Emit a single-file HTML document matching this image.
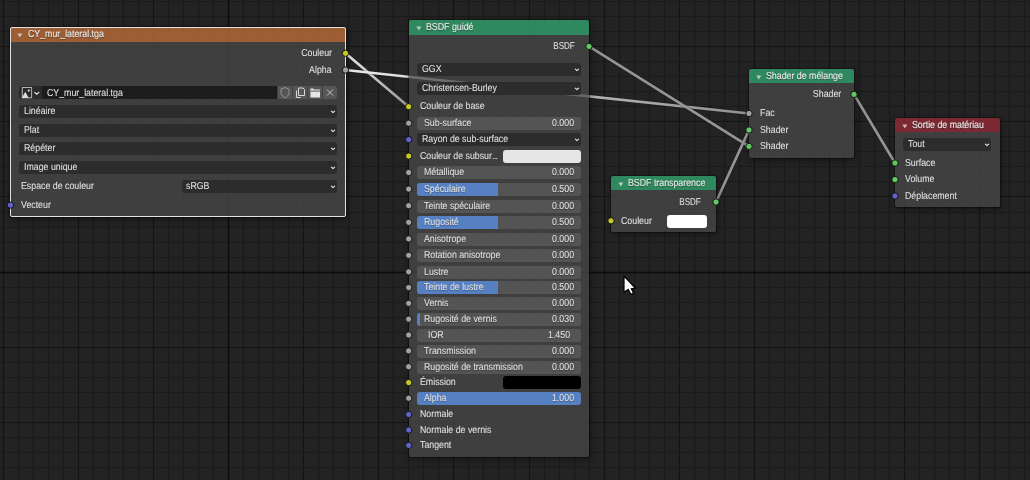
<!DOCTYPE html><html><head><meta charset="utf-8"><style>
html,body{margin:0;padding:0;}
body{width:1030px;height:480px;overflow:hidden;background:#232323;position:relative;font-family:"Liberation Sans", sans-serif;}
#wrap{position:absolute;left:0;top:0;width:1030px;height:480px;will-change:transform;text-rendering:geometricPrecision;}
.abs{position:absolute;}
.node{position:absolute;border-radius:2px;box-shadow:0 0 0 1px rgba(0,0,0,0.3),1px 2px 7px rgba(0,0,0,0.45);}
.hdr{position:absolute;left:0;top:0;right:0;border-radius:2px 2px 0 0;}
.body{position:absolute;left:0;right:0;bottom:0;border-radius:0 0 2px 2px;}
.t{position:absolute;font-size:10px;line-height:10px;height:10px;white-space:nowrap;color:#e2e2e2;transform:scaleX(0.88);transform-origin:0 0;-webkit-text-stroke:0.06px #e2e2e2;}
.t.r{transform-origin:100% 0;}
.ht{position:absolute;font-size:10px;line-height:10px;height:10px;white-space:nowrap;color:#e8e8e8;transform:scaleX(0.88);transform-origin:0 0;-webkit-text-stroke:0.15px #e8e8e8;text-shadow:0 1px 1px rgba(0,0,0,0.5);}
.sh{text-shadow:0 1px 1px rgba(0,0,0,0.35);}
.dd{position:absolute;background:#2c2c2c;border-radius:3px;}
.sl{position:absolute;background:#545454;border-radius:3px;overflow:hidden;}
.fill{position:absolute;left:0;top:0;bottom:0;background:#5680c2;}
.sock{position:absolute;width:6px;height:6px;border-radius:50%;border:1px solid #111;}

</style></head><body><div id="wrap">
<svg class="abs" style="left:0;top:0" width="1030" height="480" viewBox="0 0 1030 480"><g stroke="#1b1b1b" stroke-width="1.2"><line x1="18.50" y1="0" x2="18.50" y2="480"/><line x1="33.50" y1="0" x2="33.50" y2="480"/><line x1="48.50" y1="0" x2="48.50" y2="480"/><line x1="63.50" y1="0" x2="63.50" y2="480"/><line x1="93.50" y1="0" x2="93.50" y2="480"/><line x1="108.50" y1="0" x2="108.50" y2="480"/><line x1="123.50" y1="0" x2="123.50" y2="480"/><line x1="138.50" y1="0" x2="138.50" y2="480"/><line x1="168.50" y1="0" x2="168.50" y2="480"/><line x1="183.50" y1="0" x2="183.50" y2="480"/><line x1="198.50" y1="0" x2="198.50" y2="480"/><line x1="213.50" y1="0" x2="213.50" y2="480"/><line x1="243.50" y1="0" x2="243.50" y2="480"/><line x1="258.50" y1="0" x2="258.50" y2="480"/><line x1="273.50" y1="0" x2="273.50" y2="480"/><line x1="288.50" y1="0" x2="288.50" y2="480"/><line x1="318.50" y1="0" x2="318.50" y2="480"/><line x1="333.50" y1="0" x2="333.50" y2="480"/><line x1="348.50" y1="0" x2="348.50" y2="480"/><line x1="363.50" y1="0" x2="363.50" y2="480"/><line x1="393.50" y1="0" x2="393.50" y2="480"/><line x1="408.50" y1="0" x2="408.50" y2="480"/><line x1="423.50" y1="0" x2="423.50" y2="480"/><line x1="438.50" y1="0" x2="438.50" y2="480"/><line x1="468.50" y1="0" x2="468.50" y2="480"/><line x1="483.50" y1="0" x2="483.50" y2="480"/><line x1="498.50" y1="0" x2="498.50" y2="480"/><line x1="514.50" y1="0" x2="514.50" y2="480"/><line x1="544.50" y1="0" x2="544.50" y2="480"/><line x1="559.50" y1="0" x2="559.50" y2="480"/><line x1="574.50" y1="0" x2="574.50" y2="480"/><line x1="589.50" y1="0" x2="589.50" y2="480"/><line x1="619.50" y1="0" x2="619.50" y2="480"/><line x1="634.50" y1="0" x2="634.50" y2="480"/><line x1="649.50" y1="0" x2="649.50" y2="480"/><line x1="664.50" y1="0" x2="664.50" y2="480"/><line x1="694.50" y1="0" x2="694.50" y2="480"/><line x1="709.50" y1="0" x2="709.50" y2="480"/><line x1="724.50" y1="0" x2="724.50" y2="480"/><line x1="739.50" y1="0" x2="739.50" y2="480"/><line x1="769.50" y1="0" x2="769.50" y2="480"/><line x1="784.50" y1="0" x2="784.50" y2="480"/><line x1="799.50" y1="0" x2="799.50" y2="480"/><line x1="814.50" y1="0" x2="814.50" y2="480"/><line x1="844.50" y1="0" x2="844.50" y2="480"/><line x1="859.50" y1="0" x2="859.50" y2="480"/><line x1="874.50" y1="0" x2="874.50" y2="480"/><line x1="889.50" y1="0" x2="889.50" y2="480"/><line x1="919.50" y1="0" x2="919.50" y2="480"/><line x1="934.50" y1="0" x2="934.50" y2="480"/><line x1="949.50" y1="0" x2="949.50" y2="480"/><line x1="964.50" y1="0" x2="964.50" y2="480"/><line x1="994.50" y1="0" x2="994.50" y2="480"/><line x1="1009.50" y1="0" x2="1009.50" y2="480"/><line x1="1024.50" y1="0" x2="1024.50" y2="480"/><line x1="0" y1="1.50" x2="1030" y2="1.50"/><line x1="0" y1="16.50" x2="1030" y2="16.50"/><line x1="0" y1="31.50" x2="1030" y2="31.50"/><line x1="0" y1="61.50" x2="1030" y2="61.50"/><line x1="0" y1="76.50" x2="1030" y2="76.50"/><line x1="0" y1="91.50" x2="1030" y2="91.50"/><line x1="0" y1="106.50" x2="1030" y2="106.50"/><line x1="0" y1="136.50" x2="1030" y2="136.50"/><line x1="0" y1="151.50" x2="1030" y2="151.50"/><line x1="0" y1="166.50" x2="1030" y2="166.50"/><line x1="0" y1="181.50" x2="1030" y2="181.50"/><line x1="0" y1="212.50" x2="1030" y2="212.50"/><line x1="0" y1="227.50" x2="1030" y2="227.50"/><line x1="0" y1="242.50" x2="1030" y2="242.50"/><line x1="0" y1="257.50" x2="1030" y2="257.50"/><line x1="0" y1="287.50" x2="1030" y2="287.50"/><line x1="0" y1="302.50" x2="1030" y2="302.50"/><line x1="0" y1="317.50" x2="1030" y2="317.50"/><line x1="0" y1="332.50" x2="1030" y2="332.50"/><line x1="0" y1="362.50" x2="1030" y2="362.50"/><line x1="0" y1="377.50" x2="1030" y2="377.50"/><line x1="0" y1="392.50" x2="1030" y2="392.50"/><line x1="0" y1="407.50" x2="1030" y2="407.50"/><line x1="0" y1="437.50" x2="1030" y2="437.50"/><line x1="0" y1="452.50" x2="1030" y2="452.50"/><line x1="0" y1="467.50" x2="1030" y2="467.50"/></g><g stroke="#141414" stroke-width="1.2"><line x1="3.50" y1="0" x2="3.50" y2="480"/><line x1="78.50" y1="0" x2="78.50" y2="480"/><line x1="153.50" y1="0" x2="153.50" y2="480"/><line x1="303.50" y1="0" x2="303.50" y2="480"/><line x1="378.50" y1="0" x2="378.50" y2="480"/><line x1="453.50" y1="0" x2="453.50" y2="480"/><line x1="529.50" y1="0" x2="529.50" y2="480"/><line x1="604.50" y1="0" x2="604.50" y2="480"/><line x1="679.50" y1="0" x2="679.50" y2="480"/><line x1="754.50" y1="0" x2="754.50" y2="480"/><line x1="829.50" y1="0" x2="829.50" y2="480"/><line x1="904.50" y1="0" x2="904.50" y2="480"/><line x1="979.50" y1="0" x2="979.50" y2="480"/><line x1="0" y1="46.50" x2="1030" y2="46.50"/><line x1="0" y1="121.50" x2="1030" y2="121.50"/><line x1="0" y1="196.50" x2="1030" y2="196.50"/><line x1="0" y1="347.50" x2="1030" y2="347.50"/><line x1="0" y1="422.50" x2="1030" y2="422.50"/></g><g stroke="#0b0b0b" stroke-width="1.3"><line x1="228.50" y1="0" x2="228.50" y2="480"/><line x1="0" y1="272.50" x2="1030" y2="272.50"/></g></svg>
<svg class="abs" style="left:0;top:0" width="1030" height="480"><linearGradient id="l1" gradientUnits="userSpaceOnUse" x1="345.5" y1="53.3" x2="408.7" y2="106.7"><stop offset="0" stop-color="#e8e8e8"/><stop offset="1" stop-color="#969696"/></linearGradient><line x1="345.5" y1="53.3" x2="408.7" y2="106.7" stroke="#111" stroke-opacity="0.2" stroke-width="4.2"/><line x1="345.5" y1="53.3" x2="408.7" y2="106.7" stroke="url(#l1)" stroke-width="2.7"/><linearGradient id="l2" gradientUnits="userSpaceOnUse" x1="345.5" y1="70" x2="749" y2="113.5"><stop offset="0" stop-color="#ececec"/><stop offset="1" stop-color="#909090"/></linearGradient><line x1="345.5" y1="70" x2="749" y2="113.5" stroke="#111" stroke-opacity="0.2" stroke-width="4.2"/><line x1="345.5" y1="70" x2="749" y2="113.5" stroke="url(#l2)" stroke-width="2.7"/><linearGradient id="l3" gradientUnits="userSpaceOnUse" x1="589" y1="46.4" x2="749" y2="146.4"><stop offset="0" stop-color="#959595"/><stop offset="1" stop-color="#959595"/></linearGradient><line x1="589" y1="46.4" x2="749" y2="146.4" stroke="#111" stroke-opacity="0.2" stroke-width="4.2"/><line x1="589" y1="46.4" x2="749" y2="146.4" stroke="url(#l3)" stroke-width="2.7"/><linearGradient id="l4" gradientUnits="userSpaceOnUse" x1="716" y1="202" x2="749" y2="130"><stop offset="0" stop-color="#959595"/><stop offset="1" stop-color="#959595"/></linearGradient><line x1="716" y1="202" x2="749" y2="130" stroke="#111" stroke-opacity="0.2" stroke-width="4.2"/><line x1="716" y1="202" x2="749" y2="130" stroke="url(#l4)" stroke-width="2.7"/><linearGradient id="l5" gradientUnits="userSpaceOnUse" x1="854" y1="94.4" x2="895" y2="163"><stop offset="0" stop-color="#959595"/><stop offset="1" stop-color="#959595"/></linearGradient><line x1="854" y1="94.4" x2="895" y2="163" stroke="#111" stroke-opacity="0.2" stroke-width="4.2"/><line x1="854" y1="94.4" x2="895" y2="163" stroke="url(#l5)" stroke-width="2.7"/></svg>
<div class="node" style="left:10px;top:27px;width:336px;height:190px"><div class="hdr" style="height:15px;background:rgba(174,102,55,0.88)"></div><div class="body" style="top:15px;background:rgba(74,74,74,0.75)"></div><svg class="abs" style="left:7px;top:5px" width="6" height="6" viewBox="0 0 6 6"><path d="M0.3 1.6 L5.3 1.6 L2.8 5.4 Z" fill="#dcdcdc" opacity="0.8"/></svg><div class="ht" style="left:18px;top:3px">CY_mur_lateral.tga</div><div class="abs" style="left:0;top:0;right:0;bottom:0;border:1px solid #e2e2e2;border-radius:2px;box-sizing:border-box"></div></div>
<div class="t r" style="top:49px;right:698px;">Couleur</div>
<div class="t r" style="top:66px;right:698px;">Alpha</div>
<div class="abs" style="left:19px;top:86px;width:23px;height:13px;background:#2b2b2b;border-radius:3px 0 0 3px"></div>
<svg class="abs" style="left:21px;top:86px" width="20" height="13" viewBox="0 0 20 13"><rect x="1.3" y="1.5" width="9.3" height="10.3" fill="none" stroke="#b4b4b4" stroke-width="1"/><path d="M0.8 12 L4.25 5.8 L7.7 12 Z" fill="#dcdcdc"/><circle cx="7.8" cy="4.6" r="1.1" fill="#e0e0e0"/><path d="M13.4 6.1 L15.8 8.1 L18.2 6.1" fill="none" stroke="#e6e6e6" stroke-width="1.2"/></svg>
<div class="abs" style="left:42px;top:86px;width:235px;height:13px;background:#1d1d1d"></div>
<div class="t" style="top:89px;left:47px;">CY_mur_lateral.tga</div>
<div class="abs" style="left:278px;top:86px;width:14px;height:13px;background:#565656;"></div>
<div class="abs" style="left:293px;top:86px;width:14px;height:13px;background:#565656;"></div>
<div class="abs" style="left:308px;top:86px;width:14px;height:13px;background:#565656;"></div>
<div class="abs" style="left:323px;top:86px;width:14px;height:13px;background:#565656;border-radius:0 3px 3px 0;"></div>
<svg class="abs" style="left:278px;top:86px" width="60" height="13" viewBox="0 0 60 13"><path d="M7 1.5 L11 3.2 L11 7.5 Q10 10.5 7 12 Q4 10.5 3 7.5 L3 3.2 Z" fill="none" stroke="#9a9a9a" stroke-width="0.9"/><path d="M18.5 4.5 L18.5 11.5 L22.5 11.5" fill="none" stroke="#d8d8d8" stroke-width="1"/><path d="M20.5 2 L25 2 L26.5 3.5 L26.5 9.5 L20.5 9.5 Z" fill="none" stroke="#d8d8d8" stroke-width="1"/><path d="M32.5 2.5 L35 2.5 L36 3.5 L42 3.5 L42 11.5 L32.5 11.5 Z" fill="#e6e6e6"/><rect x="32.5" y="4.6" width="9.5" height="1" fill="#565656"/><path d="M49 3.5 L55 9.5 M55 3.5 L49 9.5" stroke="#c8c8c8" stroke-width="1"/></svg>
<div class="dd" style="left:19px;top:105px;width:318px;height:13px"></div>
<svg class="abs" style="left:330px;top:109px" width="6" height="5" viewBox="0 0 6 5"><path d="M1.1 1.8 L3 3.6 L4.9 1.8" fill="none" stroke="#f0f0f0" stroke-width="1.1"/></svg>
<div class="t" style="top:107px;left:24px;">Linéaire</div>
<div class="dd" style="left:19px;top:124px;width:318px;height:13px"></div>
<svg class="abs" style="left:330px;top:128px" width="6" height="5" viewBox="0 0 6 5"><path d="M1.1 1.8 L3 3.6 L4.9 1.8" fill="none" stroke="#f0f0f0" stroke-width="1.1"/></svg>
<div class="t" style="top:126px;left:24px;">Plat</div>
<div class="dd" style="left:19px;top:142px;width:318px;height:13px"></div>
<svg class="abs" style="left:330px;top:146px" width="6" height="5" viewBox="0 0 6 5"><path d="M1.1 1.8 L3 3.6 L4.9 1.8" fill="none" stroke="#f0f0f0" stroke-width="1.1"/></svg>
<div class="t" style="top:144px;left:24px;">Répéter</div>
<div class="dd" style="left:19px;top:161px;width:318px;height:13px"></div>
<svg class="abs" style="left:330px;top:165px" width="6" height="5" viewBox="0 0 6 5"><path d="M1.1 1.8 L3 3.6 L4.9 1.8" fill="none" stroke="#f0f0f0" stroke-width="1.1"/></svg>
<div class="t" style="top:163px;left:24px;">Image unique</div>
<div class="t" style="top:182px;left:21px;">Espace de couleur</div>
<div class="dd" style="left:182px;top:180px;width:155px;height:13px"></div>
<svg class="abs" style="left:330px;top:184px" width="6" height="5" viewBox="0 0 6 5"><path d="M1.1 1.8 L3 3.6 L4.9 1.8" fill="none" stroke="#f0f0f0" stroke-width="1.1"/></svg>
<div class="t" style="top:182px;left:186px;">sRGB</div>
<div class="t" style="top:201px;left:21px;">Vecteur</div>
<div class="node" style="left:409px;top:20px;width:180px;height:437px"><div class="hdr" style="height:15px;background:rgba(48,152,102,0.88)"></div><div class="body" style="top:15px;background:rgba(74,74,74,0.75)"></div><svg class="abs" style="left:7px;top:5px" width="6" height="6" viewBox="0 0 6 6"><path d="M0.3 1.6 L5.3 1.6 L2.8 5.4 Z" fill="#dcdcdc" opacity="0.8"/></svg><div class="ht" style="left:16.5px;top:3px">BSDF guidé</div></div>
<div class="t r" style="top:42px;right:455px;transform:scaleX(0.8);">BSDF</div>
<div class="dd" style="left:417px;top:63px;width:164px;height:13px"></div>
<svg class="abs" style="left:574px;top:67px" width="6" height="5" viewBox="0 0 6 5"><path d="M1.1 1.8 L3 3.6 L4.9 1.8" fill="none" stroke="#f0f0f0" stroke-width="1.1"/></svg>
<div class="t" style="top:65px;left:422px;">GGX</div>
<div class="dd" style="left:417px;top:82px;width:164px;height:13px"></div>
<svg class="abs" style="left:574px;top:86px" width="6" height="5" viewBox="0 0 6 5"><path d="M1.1 1.8 L3 3.6 L4.9 1.8" fill="none" stroke="#f0f0f0" stroke-width="1.1"/></svg>
<div class="t" style="top:84px;left:422px;">Christensen-Burley</div>
<div class="t" style="top:102px;left:419.5px;">Couleur de base</div>
<div class="sl" style="left:417px;top:117px;width:164px;height:13px"></div>
<div class="t sh" style="top:119px;left:424px;">Sub-surface</div>
<div class="t sh r" style="top:119px;right:456px;">0.000</div>
<div class="dd" style="left:417px;top:133px;width:164px;height:13px"></div>
<svg class="abs" style="left:574px;top:137px" width="6" height="5" viewBox="0 0 6 5"><path d="M1.1 1.8 L3 3.6 L4.9 1.8" fill="none" stroke="#f0f0f0" stroke-width="1.1"/></svg>
<div class="t" style="top:135px;left:422px;">Rayon de sub-surface</div>
<div class="t" style="top:152px;left:419.5px;">Couleur de subsur<span style="letter-spacing:-0.8px">...</span></div>
<div class="abs" style="left:503px;top:150px;width:78px;height:13px;background:#e6e6e6;border-radius:3px"></div>
<div class="sl" style="left:417px;top:166px;width:164px;height:13px"></div>
<div class="t sh" style="top:168px;left:424px;">Métallique</div>
<div class="t sh r" style="top:168px;right:456px;">0.000</div>
<div class="sl" style="left:417px;top:183px;width:164px;height:13px"><div class="fill" style="width:81.0px"></div></div>
<div class="t sh" style="top:185px;left:424px;">Spéculaire</div>
<div class="t sh r" style="top:185px;right:456px;">0.500</div>
<div class="sl" style="left:417px;top:200px;width:164px;height:13px"></div>
<div class="t sh" style="top:202px;left:424px;">Teinte spéculaire</div>
<div class="t sh r" style="top:202px;right:456px;">0.000</div>
<div class="sl" style="left:417px;top:216px;width:164px;height:13px"><div class="fill" style="width:81.0px"></div></div>
<div class="t sh" style="top:218px;left:424px;">Rugosité</div>
<div class="t sh r" style="top:218px;right:456px;">0.500</div>
<div class="sl" style="left:417px;top:233px;width:164px;height:13px"></div>
<div class="t sh" style="top:235px;left:424px;">Anisotrope</div>
<div class="t sh r" style="top:235px;right:456px;">0.000</div>
<div class="sl" style="left:417px;top:249px;width:164px;height:13px"></div>
<div class="t sh" style="top:251px;left:424px;">Rotation anisotrope</div>
<div class="t sh r" style="top:251px;right:456px;">0.000</div>
<div class="sl" style="left:417px;top:266px;width:164px;height:13px"></div>
<div class="t sh" style="top:268px;left:424px;">Lustre</div>
<div class="t sh r" style="top:268px;right:456px;">0.000</div>
<div class="sl" style="left:417px;top:281px;width:164px;height:13px"><div class="fill" style="width:81.0px"></div></div>
<div class="t sh" style="top:283px;left:424px;">Teinte de lustre</div>
<div class="t sh r" style="top:283px;right:456px;">0.500</div>
<div class="sl" style="left:417px;top:297px;width:164px;height:13px"></div>
<div class="t sh" style="top:299px;left:424px;">Vernis</div>
<div class="t sh r" style="top:299px;right:456px;">0.000</div>
<div class="sl" style="left:417px;top:313px;width:164px;height:13px"><div class="fill" style="width:2.5px"></div></div>
<div class="t sh" style="top:315px;left:424px;">Rugosité de vernis</div>
<div class="t sh r" style="top:315px;right:456px;">0.030</div>
<div class="sl" style="left:417px;top:329px;width:164px;height:13px"></div>
<div class="t sh" style="top:331px;left:428px;">IOR</div>
<div class="t sh r" style="top:331px;right:460px;">1.450</div>
<div class="sl" style="left:417px;top:345px;width:164px;height:13px"></div>
<div class="t sh" style="top:347px;left:424px;">Transmission</div>
<div class="t sh r" style="top:347px;right:456px;">0.000</div>
<div class="sl" style="left:417px;top:361px;width:164px;height:13px"></div>
<div class="t sh" style="top:363px;left:424px;">Rugosité de transmission</div>
<div class="t sh r" style="top:363px;right:456px;">0.000</div>
<div class="t" style="top:378px;left:419.5px;">Émission</div>
<div class="abs" style="left:503px;top:376px;width:78px;height:13px;background:#000000;border-radius:3px"></div>
<div class="sl" style="left:417px;top:392px;width:164px;height:13px"><div class="fill" style="width:164.0px"></div></div>
<div class="t sh" style="top:394px;left:424px;">Alpha</div>
<div class="t sh r" style="top:394px;right:456px;">1.000</div>
<div class="t" style="top:410px;left:419.5px;">Normale</div>
<div class="t" style="top:426px;left:419.5px;">Normale de vernis</div>
<div class="t" style="top:441px;left:419.5px;">Tangent</div>
<div class="node" style="left:611px;top:176px;width:105px;height:56px"><div class="hdr" style="height:14px;background:rgba(48,152,102,0.88)"></div><div class="body" style="top:14px;background:rgba(74,74,74,0.75)"></div><svg class="abs" style="left:7px;top:5px" width="6" height="6" viewBox="0 0 6 6"><path d="M0.3 1.6 L5.3 1.6 L2.8 5.4 Z" fill="#dcdcdc" opacity="0.8"/></svg><div class="ht" style="left:17px;top:3px">BSDF transparence</div></div>
<div class="t r" style="top:198px;right:329px;transform:scaleX(0.8);">BSDF</div>
<div class="t" style="top:217px;left:621px;">Couleur</div>
<div class="abs" style="left:667px;top:215px;width:40px;height:13px;background:#ffffff;border-radius:3px"></div>
<div class="node" style="left:749px;top:69px;width:105px;height:89px"><div class="hdr" style="height:14px;background:rgba(48,152,102,0.88)"></div><div class="body" style="top:14px;background:rgba(74,74,74,0.75)"></div><svg class="abs" style="left:7px;top:5px" width="6" height="6" viewBox="0 0 6 6"><path d="M0.3 1.6 L5.3 1.6 L2.8 5.4 Z" fill="#dcdcdc" opacity="0.8"/></svg><div class="ht" style="left:17px;top:3px">Shader de mélange</div></div>
<div class="t r" style="top:90px;right:189px;">Shader</div>
<div class="t" style="top:109px;left:759.7px;">Fac</div>
<div class="t" style="top:126px;left:759.7px;">Shader</div>
<div class="t" style="top:142px;left:759.7px;">Shader</div>
<div class="node" style="left:895px;top:118px;width:105px;height:89px"><div class="hdr" style="height:14px;background:rgba(138,42,53,0.88)"></div><div class="body" style="top:14px;background:rgba(74,74,74,0.75)"></div><svg class="abs" style="left:7px;top:5px" width="6" height="6" viewBox="0 0 6 6"><path d="M0.3 1.6 L5.3 1.6 L2.8 5.4 Z" fill="#dcdcdc" opacity="0.8"/></svg><div class="ht" style="left:17px;top:3px">Sortie de matériau</div></div>
<div class="dd" style="left:903px;top:138px;width:88px;height:13px"></div>
<svg class="abs" style="left:984px;top:142px" width="6" height="5" viewBox="0 0 6 5"><path d="M1.1 1.8 L3 3.6 L4.9 1.8" fill="none" stroke="#f0f0f0" stroke-width="1.1"/></svg>
<div class="t" style="top:140px;left:908px;">Tout</div>
<div class="t" style="top:159px;left:905px;">Surface</div>
<div class="t" style="top:175px;left:905px;">Volume</div>
<div class="t" style="top:192px;left:905px;">Déplacement</div>
<svg class="abs" style="left:0;top:0" width="1030" height="480"><circle cx="345.50" cy="53.30" r="3.15" fill="#c7c729" stroke="#0d0d0d" stroke-width="0.9"/><circle cx="345.50" cy="70.00" r="3.15" fill="#a1a1a1" stroke="#0d0d0d" stroke-width="0.9"/><circle cx="10.50" cy="205.10" r="3.15" fill="#6363c7" stroke="#0d0d0d" stroke-width="0.9"/><circle cx="589.00" cy="46.40" r="3.15" fill="#63c763" stroke="#0d0d0d" stroke-width="0.9"/><circle cx="408.70" cy="106.70" r="3.15" fill="#c7c729" stroke="#0d0d0d" stroke-width="0.9"/><circle cx="408.70" cy="123.20" r="3.15" fill="#a1a1a1" stroke="#0d0d0d" stroke-width="0.9"/><circle cx="408.70" cy="139.63" r="3.15" fill="#6363c7" stroke="#0d0d0d" stroke-width="0.9"/><circle cx="408.70" cy="156.07" r="3.15" fill="#c7c729" stroke="#0d0d0d" stroke-width="0.9"/><circle cx="408.70" cy="172.50" r="3.15" fill="#a1a1a1" stroke="#0d0d0d" stroke-width="0.9"/><circle cx="408.70" cy="189.10" r="3.15" fill="#a1a1a1" stroke="#0d0d0d" stroke-width="0.9"/><circle cx="408.70" cy="205.70" r="3.15" fill="#a1a1a1" stroke="#0d0d0d" stroke-width="0.9"/><circle cx="408.70" cy="222.30" r="3.15" fill="#a1a1a1" stroke="#0d0d0d" stroke-width="0.9"/><circle cx="408.70" cy="238.90" r="3.15" fill="#a1a1a1" stroke="#0d0d0d" stroke-width="0.9"/><circle cx="408.70" cy="255.35" r="3.15" fill="#a1a1a1" stroke="#0d0d0d" stroke-width="0.9"/><circle cx="408.70" cy="271.80" r="3.15" fill="#a1a1a1" stroke="#0d0d0d" stroke-width="0.9"/><circle cx="408.70" cy="287.55" r="3.15" fill="#a1a1a1" stroke="#0d0d0d" stroke-width="0.9"/><circle cx="408.70" cy="303.30" r="3.15" fill="#a1a1a1" stroke="#0d0d0d" stroke-width="0.9"/><circle cx="408.70" cy="319.16" r="3.15" fill="#a1a1a1" stroke="#0d0d0d" stroke-width="0.9"/><circle cx="408.70" cy="335.02" r="3.15" fill="#a1a1a1" stroke="#0d0d0d" stroke-width="0.9"/><circle cx="408.70" cy="350.88" r="3.15" fill="#a1a1a1" stroke="#0d0d0d" stroke-width="0.9"/><circle cx="408.70" cy="366.74" r="3.15" fill="#a1a1a1" stroke="#0d0d0d" stroke-width="0.9"/><circle cx="408.70" cy="382.60" r="3.15" fill="#c7c729" stroke="#0d0d0d" stroke-width="0.9"/><circle cx="408.70" cy="398.20" r="3.15" fill="#a1a1a1" stroke="#0d0d0d" stroke-width="0.9"/><circle cx="408.70" cy="414.50" r="3.15" fill="#6363c7" stroke="#0d0d0d" stroke-width="0.9"/><circle cx="408.70" cy="430.00" r="3.15" fill="#6363c7" stroke="#0d0d0d" stroke-width="0.9"/><circle cx="408.70" cy="445.40" r="3.15" fill="#6363c7" stroke="#0d0d0d" stroke-width="0.9"/><circle cx="716.00" cy="202.00" r="3.15" fill="#63c763" stroke="#0d0d0d" stroke-width="0.9"/><circle cx="611.00" cy="220.80" r="3.15" fill="#c7c729" stroke="#0d0d0d" stroke-width="0.9"/><circle cx="854.00" cy="94.40" r="3.15" fill="#63c763" stroke="#0d0d0d" stroke-width="0.9"/><circle cx="749.00" cy="113.50" r="3.15" fill="#a1a1a1" stroke="#0d0d0d" stroke-width="0.9"/><circle cx="749.00" cy="130.00" r="3.15" fill="#63c763" stroke="#0d0d0d" stroke-width="0.9"/><circle cx="749.00" cy="146.40" r="3.15" fill="#63c763" stroke="#0d0d0d" stroke-width="0.9"/><circle cx="895.00" cy="163.00" r="3.15" fill="#63c763" stroke="#0d0d0d" stroke-width="0.9"/><circle cx="895.00" cy="179.60" r="3.15" fill="#63c763" stroke="#0d0d0d" stroke-width="0.9"/><circle cx="895.00" cy="196.00" r="3.15" fill="#6363c7" stroke="#0d0d0d" stroke-width="0.9"/></svg>
<svg class="abs" style="left:620.5px;top:273.0px" width="20" height="26" viewBox="0 0 20 26"><path d="M3.00 3.00 L3.00 19.20 L7.20 16.40 L9.80 21.30 L12.50 20.20 L10.40 15.80 L14.30 15.20 Z" fill="#ffffff" stroke="#000" stroke-width="1.2" stroke-linejoin="miter"/></svg>
</div></body></html>
